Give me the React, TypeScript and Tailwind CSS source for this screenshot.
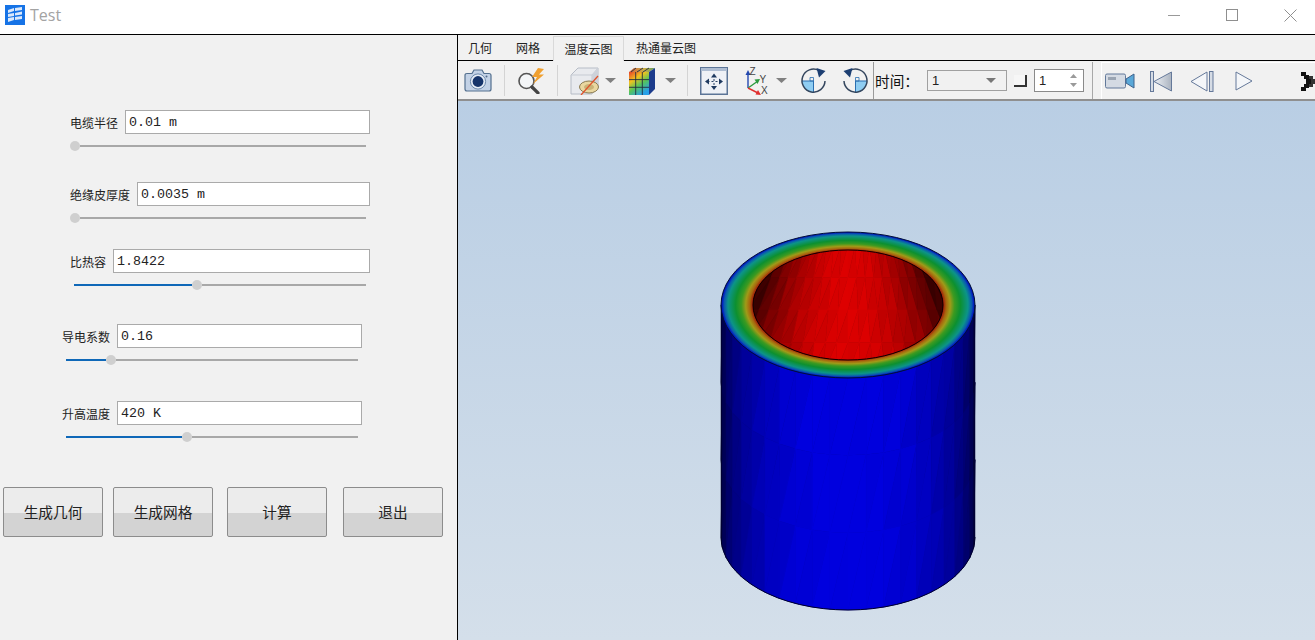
import React from 'react';

const cjk = 'font-["Noto_Sans_CJK_SC",sans-serif]';

const fields = [
    { label: '电缆半径', value: '0.01 m', ml: 'ml-[70px]', mt: 'mt-[75px]', input: 'w-[245px]', fill: 0 },
    { label: '绝缘皮厚度', value: '0.0035 m', ml: 'ml-[70px]', mt: 'mt-[31px]', input: 'w-[233px]', fill: 0 },
    { label: '比热容', value: '1.8422', ml: 'ml-[70px]', mt: 'mt-[26px]', input: 'w-[257px]', fill: 118 },
    { label: '导电系数', value: '0.16', ml: 'ml-[62px]', mt: 'mt-[34px]', input: 'w-[245px]', fill: 40 },
    { label: '升高温度', value: '420 K', ml: 'ml-[62px]', mt: 'mt-[36px]', input: 'w-[245px]', fill: 116 },
];

const buttons = [
    { text: '生成几何', ml: 'ml-[3px]' },
    { text: '生成网格', ml: 'ml-[10px]' },
    { text: '计算', ml: 'ml-[14px]' },
    { text: '退出', ml: 'ml-[16px]' },
];

const Slider = ({ fill }: { fill: number }) => (
    <div className="flex items-center w-[296px] h-[10px] mt-[7px]">
        {fill > 0 && <div className="h-[2px] ml-[4px] bg-[#0f68b8]" style={{ width: fill }} />}
        <div className="w-[10px] h-[10px] rounded-full bg-[#cfcfcf] shrink-0" />
        <div className="h-[2px] flex-1 bg-[#a8a8a8]" />
    </div>
);

const Field = ({ f }: { f: (typeof fields)[number] }) => (
    <div className={`${f.ml} ${f.mt} w-[300px]`}>
        <div className="flex items-center justify-between h-[24px]">
            <span className={`${cjk} pt-px text-[12px] text-[#222] whitespace-nowrap`}>{f.label}</span>
            <div className={`${f.input} h-[24px] border border-[#aaaaaa] bg-white pl-[3px] pt-[2px] flex items-center font-["Liberation_Mono",monospace] text-[13.33px] text-[#222] whitespace-pre`}>
                {f.value}
            </div>
        </div>
        <Slider fill={f.fill} />
    </div>
);

const LeftPanel = () => (
    <div className="w-[457px] shrink-0 bg-[#f1f1f1]">
        {fields.map((f) => (
            <Field key={f.label} f={f} />
        ))}
        <div className="flex mt-[45px]">
            {buttons.map((b) => (
                <button
                    key={b.text}
                    className={`${b.ml} ${cjk} w-[100px] h-[50px] rounded-[2px] border border-[#8c8c8c] bg-[linear-gradient(#ececec_52%,#d3d3d3_52%)] text-[14.67px] text-[#222]`}
                >
                    {b.text}
                </button>
            ))}
        </div>
    </div>
);

const Arrow = ({ ml }: { ml: string }) => (
    <svg width="11" height="5" viewBox="0 0 11 5" className={`${ml} shrink-0`}>
        <path d="M0 0H11L5.5 5Z" fill="#808080" />
    </svg>
);

const Sep = ({ ml }: { ml: string }) => <div className={`${ml} w-px h-[31px] bg-[#d4d4d4] shrink-0`} />;

const CameraIcon = () => (
    <svg width="28" height="23" viewBox="0 0 28 23" className="ml-[5px] shrink-0">
        <path d="M1 6.5Q1 4.5 3 4.5H8L10 1H18L20 4.5H25Q27 4.5 27 6.5V20Q27 22 25 22H3Q1 22 1 20Z" fill="#c3d2e6" stroke="#54708f" strokeWidth="1.2" />
        <circle cx="14" cy="12.5" r="7.6" fill="#e6edf6" stroke="#6c88aa" />
        <circle cx="14" cy="12.5" r="5.4" fill="#17356b" />
        <circle cx="22.5" cy="7.5" r="1" fill="#51698a" />
    </svg>
);

const ZoomIcon = () => (
    <svg width="29" height="26" viewBox="0 0 29 26" className="ml-[12px] shrink-0">
        <circle cx="9.5" cy="13" r="7.5" fill="#f4f6f8" stroke="#555" strokeWidth="1.6" />
        <path d="M15 19L21 25" stroke="#444" strokeWidth="3.2" strokeLinecap="round" />
        <path d="M21 0L15 9H20L16 16L27 6.5H22L27 1Z" fill="#f0a030" />
    </svg>
);

const SectionIcon = () => (
    <svg width="30" height="28" viewBox="0 0 30 28" className="ml-[12px] shrink-0">
        <path d="M1 8L8 1H28V19L22 27H1Z" fill="#e8eaee" stroke="#b6bcc6" />
        <path d="M1 8H22V27" fill="none" stroke="#c6cbd3" />
        <path d="M22 8L28 1" stroke="#c6cbd3" />
        <path d="M22 8L28 1V19L22 27Z" fill="#cdd2da" />
        <ellipse cx="19" cy="20" rx="9.5" ry="6" fill="#e9d7a0" stroke="#8a7a50" />
        <ellipse cx="19" cy="20" rx="5" ry="3" fill="#c9b377" />
        <path d="M28 9L11 28" stroke="#e0532b" strokeWidth="1.3" />
    </svg>
);

const ColorCubeIcon = () => (
    <svg width="28" height="28" viewBox="0 0 28 28" className="ml-[12px] shrink-0">
        <defs>
            <linearGradient id="cc" x1="0" y1="0" x2="0.6" y2="1">
                <stop offset="0" stopColor="#e8402a" />
                <stop offset="0.35" stopColor="#f2c21e" />
                <stop offset="0.65" stopColor="#55c45a" />
                <stop offset="1" stopColor="#28a0e8" />
            </linearGradient>
            <linearGradient id="ct" x1="0" y1="0" x2="1" y2="0">
                <stop offset="0" stopColor="#d8603a" />
                <stop offset="0.6" stopColor="#c8b048" />
                <stop offset="1" stopColor="#5a9a60" />
            </linearGradient>
        </defs>
        <path d="M1 5L6 1H27L21 5Z" fill="url(#ct)" />
        <path d="M21 5L27 1V22L21 28Z" fill="#1d3c8c" />
        <rect x="1" y="5" width="20" height="23" fill="url(#cc)" />
        <path d="M7.7 5V28M14.3 5V28M1 12.6H21M1 20.3H21M8 1L3 5M15 1L9 5M21 1L15 5" stroke="#222c40" strokeWidth="0.9" />
    </svg>
);

const FitIcon = () => (
    <svg width="28" height="28" viewBox="0 0 28 28" className="ml-[12px] shrink-0">
        <rect x="0.75" y="0.75" width="26.5" height="26.5" fill="#eef1f6" stroke="#5c7597" strokeWidth="1.5" />
        <rect x="1" y="1" width="26" height="3" fill="#aebdd2" />
        <path d="M14 8V21M7.5 14.5H20.5" stroke="#2a4468" strokeWidth="1" strokeDasharray="2 2" />
        <path d="M14 6.5L11 10.5H17ZM14 23L11 19H17ZM5 14.5L9 11.5V17.5ZM23 14.5L19 11.5V17.5Z" fill="#1f3a60" />
    </svg>
);

const AxesIcon = () => (
    <svg width="24" height="28" viewBox="0 0 24 28" className="ml-[17px] shrink-0">
        <path d="M3 21V6" stroke="#2448b0" strokeWidth="1.4" />
        <path d="M3 3L0.5 8H5.5Z" fill="#2448b0" />
        <path d="M3 21L13 14" stroke="#2a9a3e" strokeWidth="1.4" />
        <path d="M15 12L9.5 12.5L12.5 17Z" fill="#2a9a3e" />
        <path d="M3 21L13 26" stroke="#e03030" strokeWidth="1.4" />
        <path d="M16 28L10.5 27.5L13 23Z" fill="#e03030" />
        <text x="4.5" y="8" fontSize="10" fontFamily="Liberation Sans" fill="#444">Z</text>
        <text x="14.5" y="16" fontSize="10" fontFamily="Liberation Sans" fill="#444">Y</text>
        <text x="16" y="27" fontSize="10" fontFamily="Liberation Sans" fill="#444">X</text>
    </svg>
);

const RotateIcon = ({ ml, flip }: { ml: string; flip?: boolean }) => (
    <svg width="27" height="27" viewBox="0 0 27 27" className={`${ml} shrink-0`}>
        <g transform={flip ? 'translate(27 0) scale(-1 1)' : undefined}>
            <path d="M2 14H13.5V25.5A11.5 11.5 0 0 1 2 14Z" fill="#8fcdf2" />
            <path d="M10 10.5H13.5V14H10Z" fill="none" stroke="#2a6fb0" strokeWidth="0.8" />
            <path d="M2 14H13.5V25.5" fill="none" stroke="#2a6fb0" strokeWidth="1" />
            <path d="M19 3.5A11.5 11.5 0 1 0 25 14" fill="none" stroke="#34465e" strokeWidth="1.5" />
            <path d="M16.5 1L25.5 4L19 10.5Z" fill="#1d3f72" />
        </g>
    </svg>
);

const VideoIcon = () => (
    <svg width="30" height="16" viewBox="0 0 30 16" className="ml-[3px] shrink-0">
        <rect x="0.5" y="1" width="20" height="14" rx="1.5" fill="#d4dae3" stroke="#62799a" />
        <rect x="3" y="4" width="8" height="3" fill="#9aa4b2" />
        <path d="M21 6L29 1V15L21 10Z" fill="#5aa8d8" stroke="#3f628c" />
    </svg>
);

const FirstIcon = () => (
    <svg width="22" height="21" viewBox="0 0 22 21" className="ml-[15px] shrink-0">
        <defs>
            <linearGradient id="tri" x1="0" y1="0" x2="1" y2="0">
                <stop offset="0" stopColor="#eef1f5" />
                <stop offset="1" stopColor="#aab3c0" />
            </linearGradient>
        </defs>
        <rect x="0.5" y="0.5" width="3" height="20" fill="#d6dce5" stroke="#65799a" />
        <path d="M4 10.5L21.5 1V20Z" fill="url(#tri)" stroke="#65799a" />
    </svg>
);

const PrevIcon = () => (
    <svg width="24" height="21" viewBox="0 0 24 21" className="ml-[18px] shrink-0">
        <path d="M1 10.5L17 1V20Z" fill="#f4f6f9" stroke="#65799a" />
        <rect x="19.5" y="0.5" width="3.5" height="20" fill="#d6dce5" stroke="#65799a" />
    </svg>
);

const NextIcon = () => (
    <svg width="18" height="20" viewBox="0 0 18 20" className="ml-[21px] shrink-0">
        <path d="M1 1L17 10L1 19Z" fill="#f4f6f9" stroke="#65799a" />
    </svg>
);

const MoreIcon = () => (
    <svg width="14" height="19" viewBox="0 0 14 19" className="ml-[48px] shrink-0" shapeRendering="crispEdges">
        <path d="M0 0H5V3H8V6H10V13H8V16H5V19H0V15H3V12H5V7H3V4H0Z" fill="#111" />
        <path d="M8 4H12V7H14V12H12V15H8V12H10V7H8Z" fill="#333" />
    </svg>
);

const Toolbar = () => (
    <div className="h-[40px] flex items-center bg-[#f1f1f1] border-b-2 border-[#8f8f8f] pl-px pt-px overflow-hidden">
        <CameraIcon />
        <Sep ml="ml-[12px]" />
        <ZoomIcon />
        <Sep ml="ml-[11px]" />
        <SectionIcon />
        <Arrow ml="ml-[5px]" />
        <ColorCubeIcon />
        <Arrow ml="ml-[9px]" />
        <Sep ml="ml-[11px]" />
        <FitIcon />
        <AxesIcon />
        <Arrow ml="ml-[7px]" />
        <RotateIcon ml="ml-[13px]" />
        <RotateIcon ml="ml-[15px]" flip />
        <div className="ml-[4px] w-px h-[38px] bg-[#9a9a9a] shrink-0" />
        <span className={`${cjk} ml-[1px] w-[52px] text-[14.67px] text-[#111] shrink-0 whitespace-nowrap`}>时间：</span>
        <div className="w-[80px] h-[21px] border border-[#a0a0a0] flex items-center justify-between pl-[4px] pr-[10px] shrink-0">
            <span className='font-["Liberation_Sans",sans-serif] text-[13px] text-[#222]'>1</span>
            <svg width="10" height="5" viewBox="0 0 10 5"><path d="M0 0H10L5 5Z" fill="#777" /></svg>
        </div>
        <div className="ml-[7px] w-[13px] h-[12px] border-r-2 border-b-2 border-[#333] bg-[#f6f6f6] shrink-0" />
        <div className="ml-[7px] w-[50px] h-[23px] border border-[#8a8a8a] bg-white flex items-center justify-between pl-[4px] pr-[6px] shrink-0">
            <span className='font-["Liberation_Sans",sans-serif] text-[13px] text-[#222]'>1</span>
            <svg width="7" height="13" viewBox="0 0 7 13"><path d="M3.5 0L7 4H0ZM3.5 13L0 9H7Z" fill="#9a9a9a" /></svg>
        </div>
        <div className="ml-[8px] w-px h-[38px] bg-[#a8a8a8] shrink-0" />
        <div className="ml-[8px] flex-1 h-[38px] flex items-center border-t border-l border-white">
            <VideoIcon />
            <FirstIcon />
            <PrevIcon />
            <NextIcon />
            <MoreIcon />
        </div>
    </div>
);

const cx = 848;
const topY = 305;
const botY = 537;
const R = 127;
const RY = 73;

// small repeatable jitter so the triangles read as mesh facets
const jitter = (i: number, j: number) => ((i * 7 + j * 13) % 5) * 3 - 6;

// faceted outer wall of the tube
const outerFacets = (() => {
    const out: { pts: string; fill: string }[] = [];
    const n = 22;
    const rows = 3;
    for (let i = 0; i < n; i++) {
        const a = -Math.PI / 2 + (Math.PI * i) / n;
        const b = -Math.PI / 2 + (Math.PI * (i + 1)) / n;
        for (let r = 0; r < rows; r++) {
            const y1 = topY + ((botY - topY) * r) / rows;
            const y2 = topY + ((botY - topY) * (r + 1)) / rows;
            const p = (t: number, y: number) => `${cx + R * Math.sin(t)},${y + RY * Math.cos(t)}`;
            const shade = (t: number, k: number) => {
                const c = Math.cos(t);
                const v = Math.round(36 + 190 * Math.pow(c, 0.9)) + Math.round(jitter(i, k) * c);
                return Math.max(0, Math.min(v, 222));
            };
            out.push({ pts: `${p(a, y1)} ${p(b, y1)} ${p(a, y2)}`, fill: `rgb(0,0,${shade(a + (b - a) * 0.35, r * 2)})` });
            out.push({ pts: `${p(b, y1)} ${p(b, y2)} ${p(a, y2)}`, fill: `rgb(0,0,${shade(a + (b - a) * 0.65, r * 2 + 1)})` });
        }
    }
    return out;
})();

// inner wall, fan of strips clipped by the inner rim
const innerFacets = (() => {
    const out: { pts: string; fill: string }[] = [];
    const n = 22;
    const rows = 4;
    const y0 = 245;
    const y1 = 375;
    const xAt = (s: number, y: number) => cx + s * (60 + (45 * (y - y0)) / (y1 - y0));
    for (let i = 0; i < n; i++) {
        const a = -1.32 + (2.64 * i) / n;
        const b = -1.32 + (2.64 * (i + 1)) / n;
        const xn = Math.min(Math.abs(((a + b) / 2) * 79) / 95, 1);
        const base = 36 + 182 * Math.pow(1 - xn * xn, 0.9);
        for (let r = 0; r < rows; r++) {
            const ya = y0 + ((y1 - y0) * r) / rows;
            const yb = y0 + ((y1 - y0) * (r + 1)) / rows;
            const col = (k: number) => `rgb(${Math.max(0, Math.min(Math.round(base + jitter(i, k)), 222))},0,0)`;
            out.push({ pts: `${xAt(a, ya)},${ya} ${xAt(b, ya)},${ya} ${xAt(a, yb)},${yb}`, fill: col(r * 2) });
            out.push({ pts: `${xAt(b, ya)},${ya} ${xAt(b, yb)},${yb} ${xAt(a, yb)},${yb}`, fill: col(r * 2 + 1) });
        }
    }
    return out;
})();

const Tube = () => (
    <svg width="270" height="390" viewBox="715 225 270 390" className="ml-[257px] shrink-0">
        <defs>
            <radialGradient id="ring" cx="0.5" cy="0.5" r="0.5">
                <stop offset="0.75" stopColor="#a01808" />
                <stop offset="0.775" stopColor="#a8660e" />
                <stop offset="0.805" stopColor="#a09a18" />
                <stop offset="0.84" stopColor="#3c9a20" />
                <stop offset="0.885" stopColor="#0c9030" />
                <stop offset="0.945" stopColor="#0c9488" />
                <stop offset="0.975" stopColor="#0a58b0" />
                <stop offset="0.993" stopColor="#0014c0" />
                <stop offset="1" stopColor="#000c80" />
            </radialGradient>
            <clipPath id="innerClip">
                <ellipse cx={cx} cy={topY} rx="95" ry="55" />
            </clipPath>
        </defs>
        <rect x={cx - R} y={topY} width={R * 2} height={botY - topY} fill="#000050" />
        <ellipse cx={cx} cy={botY} rx={R} ry={RY} fill="#000080" />
        {outerFacets.map((f, i) => (
            <polygon key={i} points={f.pts} fill={f.fill} stroke={f.fill} strokeWidth="0.5" />
        ))}
        <path d={`M${cx - R} ${botY}A${R} ${RY} 0 0 0 ${cx + R} ${botY}`} fill="none" stroke="#00002a" strokeWidth="1" />
        <path d={`M${cx - R + 0.5} ${topY}V${botY}M${cx + R - 0.5} ${topY}V${botY}`} stroke="#000034" strokeWidth="1" />
        <ellipse cx={cx} cy={topY} rx={R} ry={RY} fill="url(#ring)" stroke="#00103a" strokeWidth="1" />
        <ellipse cx={cx} cy={topY} rx="95" ry="55" fill="#200000" />
        <g clipPath="url(#innerClip)">
            {innerFacets.map((f, i) => (
                <polygon key={i} points={f.pts} fill={f.fill} stroke={f.fill} strokeWidth="0.5" />
            ))}
        </g>
        <ellipse cx={cx} cy={topY} rx="95" ry="55" fill="none" stroke="#120000" strokeWidth="1" />
    </svg>
);

const RightPanel = () => (
    <div className="flex-1 min-w-0 flex flex-col border-l border-black">
        <div className="h-[26px] flex items-end bg-[#f1f1f1] border-b border-black pl-[10px] text-[12px] text-[#222]">
            <div className={`${cjk} w-[48px] h-[25px] flex items-center`}>几何</div>
            <div className={`${cjk} w-[37px] h-[25px] flex items-center`}>网格</div>
            <div className={`${cjk} w-[71px] h-[25px] -mb-px flex items-center justify-center bg-[#f1f1f1] border border-b-0 border-[#d9d9d9]`}>温度云图</div>
            <div className={`${cjk} ml-[12px] h-[25px] flex items-center`}>热通量云图</div>
        </div>
        <Toolbar />
        <div className="flex-1 bg-[linear-gradient(#b9cee4,#d4dfea)] pt-[124px] flex overflow-hidden">
            <Tube />
        </div>
    </div>
);

const TitleBar = () => (
    <div className="h-[35px] flex items-center bg-white border-b border-black shrink-0 pb-[4px]">
        <svg width="20" height="20" viewBox="0 0 20 20" className="ml-[5px] shrink-0">
            <rect width="20" height="20" fill="#1673e6" />
            <path d="M3 5L9 3V6L3 8ZM10 3L17 2V5L10 6ZM3 9L9 8V11L3 12ZM10 8L17 6.5V9.5L10 10.5ZM3 13L9 12V15L3 17ZM10 12L17 11V14L10 15Z" fill="#dbe9fb" />
        </svg>
        <span className='ml-[5px] font-["Open_Sans",sans-serif] text-[16px] text-[#a3a3a3]'>Test</span>
        <div className="ml-auto flex items-center">
            <div className="w-[12px] h-px bg-[#999]" />
            <div className="ml-[46px] w-[12px] h-[12px] border border-[#8f8f8f]" />
            <svg width="13" height="13" viewBox="0 0 13 13" className="ml-[46px] mr-[18px]">
                <path d="M0.5 0.5L12.5 12.5M12.5 0.5L0.5 12.5" stroke="#8f8f8f" />
            </svg>
        </div>
    </div>
);

export default function App() {
    return (
        <div className="w-[1315px] h-[640px] flex flex-col overflow-hidden bg-[#f1f1f1]">
            <TitleBar />
            <div className="flex-1 flex min-h-0">
                <LeftPanel />
                <RightPanel />
            </div>
        </div>
    );
}
